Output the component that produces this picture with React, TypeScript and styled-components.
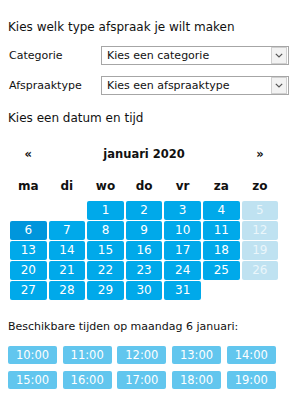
import styled, { createGlobalStyle } from "styled-components";

const GlobalStyle = createGlobalStyle`
  html, body {
    margin: 0;
    padding: 0;
    background: #ffffff;
  }
  body {
    font-family: "DejaVu Sans", Verdana, sans-serif;
    color: #111;
  }
`;

type DayCell = { day: number | null; weekend?: boolean; selected?: boolean };

const weekDays = ["ma", "di", "wo", "do", "vr", "za", "zo"];
const times = ["10:00", "11:00", "12:00", "13:00", "14:00", "15:00", "16:00", "17:00", "18:00", "19:00"];

const buildMonth = (): DayCell[] => {
  const cells: DayCell[] = [{ day: null }, { day: null }];
  for (let d = 1; d <= 31; d++) {
    const col = (d + 1) % 7; // 1 jan 2020 = woensdag
    cells.push({ day: d, weekend: col === 6, selected: d === 6 });
  }
  return cells;
};

const Page = styled.div`
  width: 300px;
  padding: 20px 8px 0 8px;
  box-sizing: border-box;
`;

const Heading = styled.div<{ $top?: number; $gap?: number }>`
  font-size: 12px;
  line-height: 14px;
  margin-top: ${(p) => p.$top ?? 0}px;
  margin-bottom: ${(p) => p.$gap ?? 0}px;
`;

const FieldRow = styled.div`
  display: grid;
  grid-template-columns: 93px 188px;
  align-items: start;
  margin-bottom: 11px;
`;

const Label = styled.div`
  font-size: 11px;
  line-height: 13px;
  padding: 3px 0 0 1px;
`;

const Select = styled.div`
  height: 19px;
  box-sizing: border-box;
  border: 1px solid #a6a6a6;
  background: #fff;
  display: flex;
  align-items: center;
  justify-content: space-between;
  font-size: 11px;
  padding-left: 5px;
`;

const Arrow = styled.div`
  width: 14px;
  height: 15px;
  margin-right: 1px;
  border: 1px solid #cfcfcf;
  background: #f2f2f2;
  display: flex;
  align-items: center;
  justify-content: center;
`;

const Calendar = styled.div`
  display: grid;
  grid-template-columns: repeat(7, 36.6px);
  column-gap: 2px;
  row-gap: 1.5px;
  margin: 22px 0 0 2px;
`;

const NavCell = styled.div<{ $span?: number }>`
  grid-column: span ${(p) => p.$span ?? 1};
  text-align: center;
  font-size: 11.5px;
  font-weight: bold;
  line-height: 15px;
  margin-bottom: 15px;
`;

const WeekDay = styled.div`
  text-align: center;
  font-size: 12px;
  font-weight: bold;
  line-height: 14px;
  margin-bottom: 7px;
`;

const Day = styled.div<{ $weekend?: boolean; $selected?: boolean; $empty?: boolean }>`
  height: 18.5px;
  border-radius: 2px;
  display: flex;
  align-items: center;
  justify-content: center;
  font-size: 12px;
  color: ${(p) => (p.$weekend ? "#eaf6fb" : "#ffffff")};
  background: ${(p) =>
    p.$empty ? "transparent" : p.$weekend ? "#bfe2f1" : p.$selected ? "#0096dc" : "#00a9ea"};
`;

const SlotTitle = styled.div`
  font-size: 11px;
  line-height: 13px;
  margin: 20px 0 13px 0;
`;

const Slots = styled.div`
  display: grid;
  grid-template-columns: repeat(5, 49px);
  column-gap: 5.7px;
  row-gap: 6.5px;
`;

const Slot = styled.div`
  height: 18.5px;
  border-radius: 2px;
  background: #62c6ee;
  color: #fff;
  font-size: 11.5px;
  display: flex;
  align-items: center;
  justify-content: center;
`;

const Chevron = () => (
  <svg width="8" height="5" viewBox="0 0 8 5">
    <path d="M0.8 0.8 L4 4 L7.2 0.8" fill="none" stroke="#555" strokeWidth="1.2" />
  </svg>
);

export default function App() {
  const month = buildMonth();
  return (
    <>
      <GlobalStyle />
      <Page>
        <Heading $gap={12}>Kies welk type afspraak je wilt maken</Heading>
        <FieldRow>
          <Label>Categorie</Label>
          <Select>
            Kies een categorie
            <Arrow>
              <Chevron />
            </Arrow>
          </Select>
        </FieldRow>
        <FieldRow>
          <Label>Afspraaktype</Label>
          <Select>
            Kies een afspraaktype
            <Arrow>
              <Chevron />
            </Arrow>
          </Select>
        </FieldRow>
        <Heading $top={16}>Kies een datum en tijd</Heading>
        <Calendar>
          <NavCell>«</NavCell>
          <NavCell $span={5}>januari 2020</NavCell>
          <NavCell>»</NavCell>
          {weekDays.map((w) => (
            <WeekDay key={w}>{w}</WeekDay>
          ))}
          {month.map((c, i) => (
            <Day key={i} $empty={c.day === null} $weekend={c.weekend} $selected={c.selected}>
              {c.day}
            </Day>
          ))}
        </Calendar>
        <SlotTitle>Beschikbare tijden op maandag 6 januari:</SlotTitle>
        <Slots>
          {times.map((t) => (
            <Slot key={t}>{t}</Slot>
          ))}
        </Slots>
      </Page>
    </>
  );
}
